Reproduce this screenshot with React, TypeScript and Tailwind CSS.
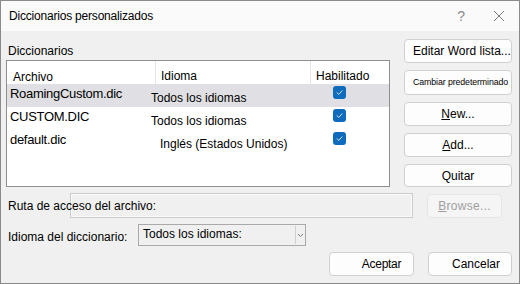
import React from "react";

const font = { fontFamily: '"Liberation Sans", Arial, sans-serif' };

function Check() {
  return (
    <div className="w-[13px] h-[13px] rounded-[3px] bg-[#0f6cbd] flex items-center justify-center">
      <svg width="9" height="9" viewBox="0 0 9 9">
        <path d="M2 4.8 L3.8 6.4 L7 2.8" fill="none" stroke="#cfe0f4" strokeWidth="1" strokeLinecap="round" strokeLinejoin="round" />
      </svg>
    </div>
  );
}

function Btn({
  children,
  className = "h-[24px] justify-center text-[12px]",
}: {
  children: React.ReactNode;
  className?: string;
}) {
  return (
    <div
      className={
        "rounded-[4px] border border-[#d0d0d0] bg-[#fdfdfd] flex items-center text-black whitespace-nowrap " +
        className
      }
    >
      {children}
    </div>
  );
}

const rows = [
  { file: "RoamingCustom.dic", lang: "Todos los idiomas", pad: "pl-[151px]", sel: true },
  { file: "CUSTOM.DIC", lang: "Todos los idiomas", pad: "pl-[151px]", sel: false },
  { file: "default.dic", lang: "Inglés (Estados Unidos)", pad: "pl-[160px]", sel: false },
];

export default function App() {
  return (
    <div
      style={font}
      className="w-[520px] h-[284px] border border-[#8a8a8a] bg-[#f0f0f0] flex flex-col text-black overflow-hidden"
    >
      {/* title bar */}
      <div className="h-[30px] bg-[#fafafa] flex items-center pl-[8px] shrink-0">
        <span className="text-[12px] tracking-[-0.2px]">Diccionarios personalizados</span>
        <div className="ml-auto flex items-center gap-[28px] pr-[14px] text-[#8a8a8a]">
          <span className="text-[14px]">?</span>
          <svg width="12" height="12" viewBox="0 0 12 12">
            <path d="M1 1 L11 11 M11 1 L1 11" stroke="#7a7a7a" strokeWidth="1" />
          </svg>
        </div>
      </div>

      {/* top section */}
      <div className="flex h-[156px] shrink-0">
        <div className="w-[384px] ml-[5px] flex flex-col">
          <div className="h-[29px] pt-[13px] pl-[2px] text-[12px] leading-[14px]">Diccionarios</div>
          <div className="flex-1 border border-[#8f8f8f] bg-white flex flex-col">
            <div className="h-[23px] flex text-[12px] shrink-0">
              <div className="w-[149px] border-r border-[#e5e5e5] pl-[6px] pt-[7px]">Archivo</div>
              <div className="w-[155px] border-r border-[#e5e5e5] pl-[5px] pt-[6px]">Idioma</div>
              <div className="flex-1 pl-[5px] pt-[6px]">Habilitado</div>
            </div>
            {rows.map((r) => (
              <div
                key={r.file}
                className={"h-[23px] flex items-center relative text-[12px] " + (r.sel ? "bg-[#e0e0e4]" : "")}
              >
                <div className="w-[144px] pl-[3px] text-[13px] tracking-[-0.3px] -mt-[3px] shrink-0 whitespace-nowrap">{r.file}</div>
                <div className={"absolute left-0 top-[5px] whitespace-nowrap " + r.pad}>
                  <span className="-ml-[7px]">{r.lang}</span>
                </div>
                <div className="absolute left-[326px] top-[2px]">
                  <Check />
                </div>
              </div>
            ))}
          </div>
        </div>
        <div className="ml-[14px] w-[108px] pt-[8px] flex flex-col gap-[7px]">
          <Btn className="h-[24px] justify-start pl-[8px] text-[12px]">Editar Word lista...</Btn>
          <Btn className="h-[25px] justify-start pl-[8px] text-[8.8px] tracking-[-0.1px]">Cambiar predeterminado</Btn>
          <Btn>
            <span>
              <span className="underline">N</span>ew...
            </span>
          </Btn>
          <Btn>
            <span>
              <span className="underline">A</span>dd...
            </span>
          </Btn>
          <Btn className="h-[23px] justify-center text-[12px]">Quitar</Btn>
        </div>
      </div>

      {/* ruta row */}
      <div className="flex items-center mt-[6px] h-[25px] shrink-0">
        <span className="relative z-10 pl-[7px] text-[12px] -mr-[86px] whitespace-nowrap">Ruta de acceso del archivo:</span>
        <div className="w-[343px] h-[25px] border border-[#cccccc] bg-[#f0f0f0] shadow-[inset_0_0_0_1px_#fafafa]" />
        <div className="ml-[14px] w-[75px] h-[24px] rounded-[4px] border border-[#e6e6e6] bg-[#f5f5f5] flex items-center justify-center text-[12px] text-[#a0a0a0] tracking-[0.3px] whitespace-nowrap">
          <span>
            <span className="underline">B</span>rowse...
          </span>
        </div>
      </div>

      {/* idioma row */}
      <div className="flex items-center mt-[6px] h-[22px] shrink-0">
        <span className="pl-[7px] w-[137px] text-[12px] pt-[4px] whitespace-nowrap">Idioma del diccionario:</span>
        <div className="w-[168px] h-[22px] border border-[#a9a9a9] bg-[#f0f0f0] flex items-center text-[12px]">
          <span className="pl-[4px] flex-1 -mt-[2px] whitespace-nowrap">Todos los idiomas:</span>
          <div className="w-[10px] h-[18px] border-l border-[#cfcfcf] flex items-center justify-center">
            <svg width="7" height="5" viewBox="0 0 7 5">
              <path d="M1 1 L3.5 3.5 L6 1" fill="none" stroke="#7a7a7a" strokeWidth="1" />
            </svg>
          </div>
        </div>
      </div>

      {/* bottom buttons */}
      <div className="flex mt-[6px] h-[24px] shrink-0">
        <div className="ml-[328px] w-[85px] h-[24px] rounded-[4px] border border-[#d0d0d0] bg-[#fdfdfd] flex items-center justify-center pl-[20px] text-[12px] tracking-[-0.3px]">
          Aceptar
        </div>
        <div className="ml-[14px] w-[84px] h-[24px] rounded-[4px] border border-[#d0d0d0] bg-[#fdfdfd] flex items-center justify-center pl-[12px] text-[12px]">
          Cancelar
        </div>
      </div>
    </div>
  );
}
